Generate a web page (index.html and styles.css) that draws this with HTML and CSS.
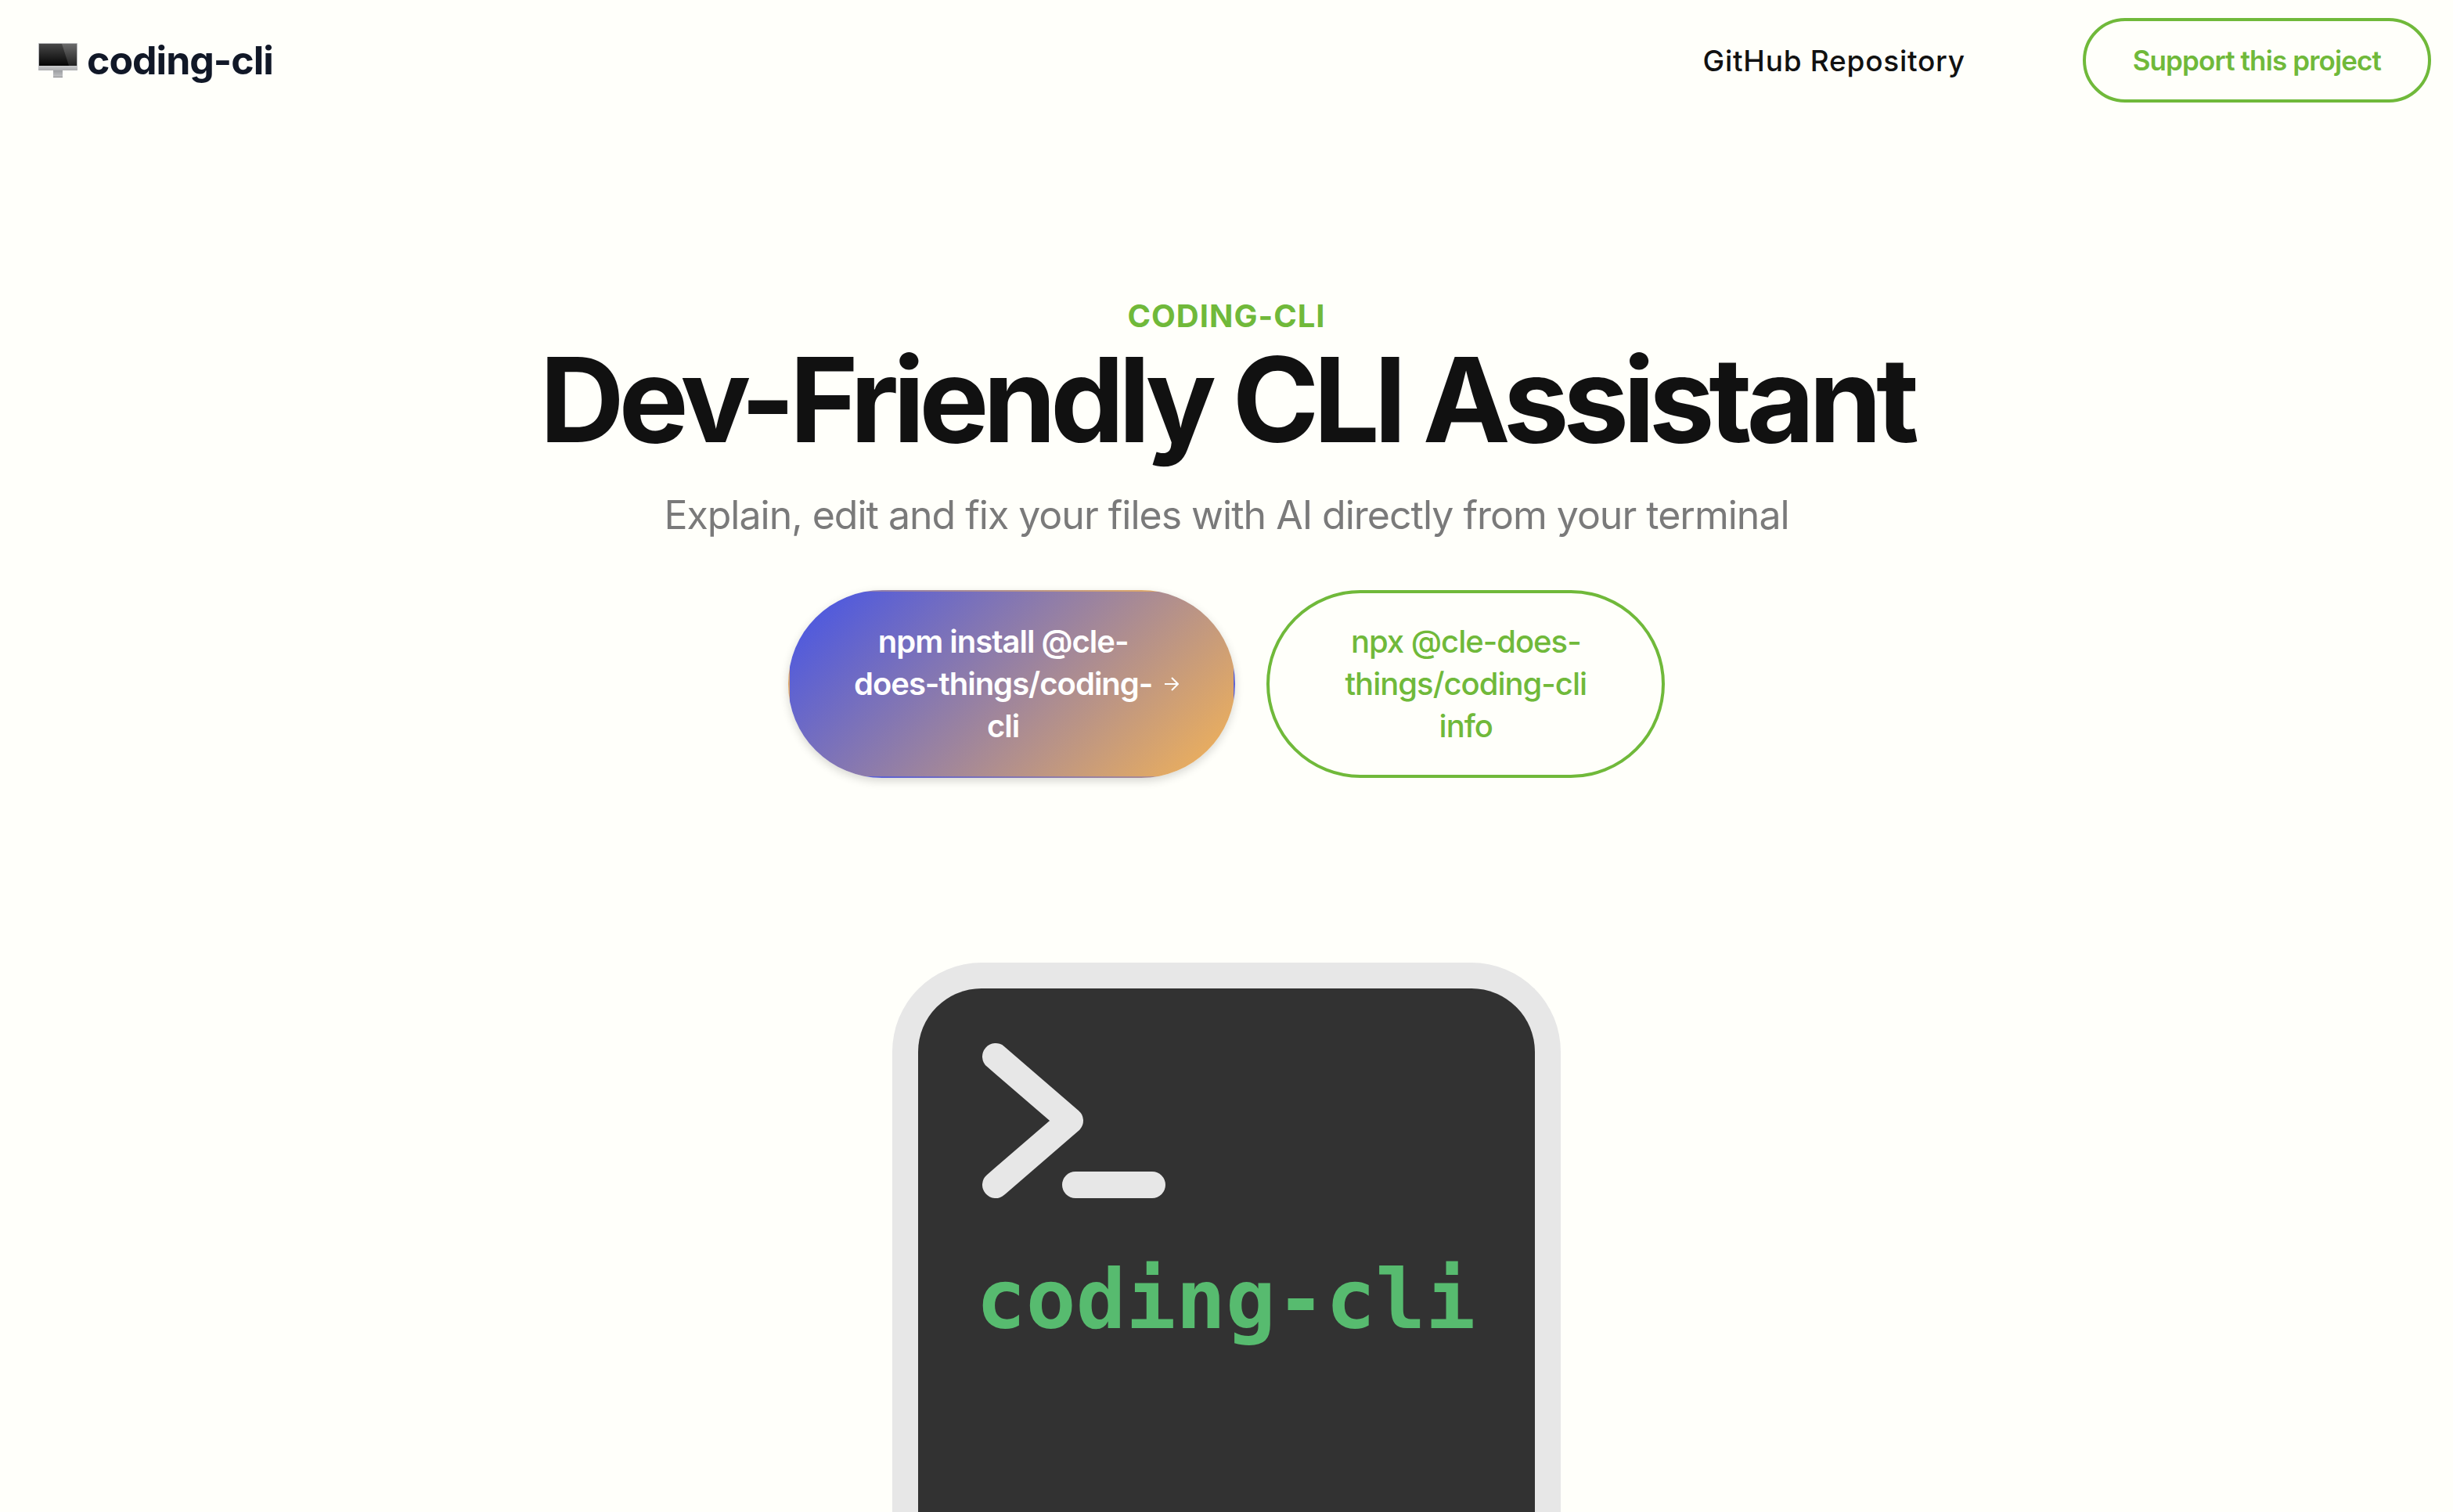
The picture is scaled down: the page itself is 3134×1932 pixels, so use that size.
FILE: index.html
```html
<!DOCTYPE html>
<html lang="en">
<head>
<meta charset="utf-8">
<meta name="viewport" content="width=device-width, initial-scale=1">
<title>coding-cli</title>
<link rel="stylesheet" href="styles.css">
</head>
<body>
<header class="navbar">
  <a class="brand" href="#">
    <svg class="brand-icon" viewBox="0 0 50 44" aria-hidden="true">
      <defs>
        <linearGradient id="screen" x1="0" y1="0" x2="0" y2="1"><stop offset="0" stop-color="#474747"/><stop offset="1" stop-color="#050505"/></linearGradient>
        <linearGradient id="shine" x1="0" y1="0" x2="0" y2="1"><stop offset="0" stop-color="#6a6a6a"/><stop offset="1" stop-color="#222"/></linearGradient>
        <linearGradient id="chin" x1="0" y1="0" x2="0" y2="1"><stop offset="0" stop-color="#c9cacc"/><stop offset="1" stop-color="#adaeb1"/></linearGradient>
        <linearGradient id="stand" x1="0" y1="0" x2="0" y2="1"><stop offset="0" stop-color="#999b9e"/><stop offset="1" stop-color="#c4c5c7"/></linearGradient>
      </defs>
      <rect x="19" y="34" width="12" height="10" fill="url(#stand)"/>
      <rect width="50" height="35" rx="1" fill="#b6b7b9"/>
      <rect x="1" y="1" width="48" height="28" fill="url(#screen)"/>
      <path d="M30 1H49V29H39Z" fill="url(#shine)"/>
      <rect y="29" width="50" height="6" rx="1" fill="url(#chin)"/>
      <rect x="19" y="43" width="12" height="1" fill="#88898c"/>
    </svg>
    <span>coding-cli</span>
  </a>
  <nav class="nav-links">
    <a class="nav-link" href="#">GitHub Repository</a>
    <a class="button button-small" href="#">Support this project</a>
  </nav>
</header>
<main class="hero">
  <p class="eyebrow">CODING-CLI</p>
  <h1 class="title">Dev-Friendly CLI Assistant</h1>
  <p class="subtitle">Explain, edit and fix your files with AI directly from your terminal</p>
  <div class="actions">
    <button class="button button-large button-primary" type="button">
      <span>npm install @cle-<br>does-things/coding-<br>cli</span>
      <svg class="arrow" viewBox="0 0 18 18" aria-hidden="true"><path d="M0 9H16M9 1L17 9L9 17"/></svg>
    </button>
    <button class="button button-large" type="button">npx @cle-does-<br>things/coding-cli<br>info</button>
  </div>
  <div class="terminal">
    <svg class="prompt" viewBox="0 0 234 198" aria-hidden="true"><path d="M17 17L112 99L17 181M119 181H217"/></svg>
    <p class="terminal-text">coding-cli</p>
  </div>
</main>
</body>
</html>
```
FILE: styles.css
```css
* {
  box-sizing: border-box;
}

body {
  margin: 0;
  min-height: 100vh;
  display: flex;
  flex-direction: column;
  background: #fffffa;
  color: #111;
  font-family: Inter, "Liberation Sans", sans-serif;
}

p,
h1 {
  margin: 0;
}

a {
  color: inherit;
  text-decoration: none;
}

.navbar {
  display: flex;
  justify-content: space-between;
  align-items: center;
  padding: 23px 28px 23px 49px;
}

.brand {
  display: flex;
  align-items: center;
  gap: 12px;
  color: #111827;
  font-size: 50px;
  font-weight: 700;
  line-height: 60px;
  letter-spacing: -0.02em;
}

.brand-icon {
  width: 50px;
  height: 44px;
}

.nav-links {
  display: flex;
  align-items: center;
  gap: 150px;
}

.nav-link {
  font-size: 37px;
  font-weight: 500;
  letter-spacing: 0.02em;
}

.button {
  border: 4px solid #70b93a;
  border-radius: 120px;
  background: transparent;
  color: #70b93a;
  font-family: inherit;
  letter-spacing: -0.025em;
  cursor: pointer;
}

.button-small {
  padding: 26px 60px;
  font-size: 35px;
  font-weight: 600;
  line-height: 48px;
}

.hero {
  flex: 1;
  display: flex;
  flex-direction: column;
  align-items: center;
  padding-top: 228px;
  text-align: center;
}

.eyebrow {
  color: #70b93a;
  font-size: 40px;
  font-weight: 700;
  line-height: 44px;
  letter-spacing: 0.025em;
}

.title {
  font-size: 150px;
  font-weight: 700;
  line-height: 170px;
  letter-spacing: -0.05em;
}

.subtitle {
  padding-top: 22px;
  color: #7a7a7a;
  font-size: 50px;
  line-height: 80px;
  letter-spacing: -0.02em;
}

.actions {
  display: flex;
  gap: 40px;
  padding-top: 56px;
}

.button-large {
  padding: 35px 96px;
  font-size: 40px;
  font-weight: 500;
  line-height: 54px;
}

.button-primary {
  display: flex;
  align-items: center;
  gap: 16px;
  padding: 37px 70px 37px 82px;
  border: 2px solid transparent;
  background: linear-gradient(135deg, #4353e8, #f5b455);
  box-shadow: 0 4px 12px rgba(0, 0, 0, 0.16);
  color: #fff;
  font-weight: 600;
}

.arrow {
  width: 18px;
  height: 18px;
  fill: none;
  stroke: currentColor;
  stroke-width: 2;
}

.terminal {
  flex: 1;
  width: 100%;
  max-width: 854px;
  margin-top: 236px;
  padding: 70px 74px;
  border: 33px solid #e7e7e7;
  border-bottom: 0;
  border-radius: 114px 114px 0 0;
  background: #323232;
  text-align: left;
}

.prompt {
  display: block;
  width: 234px;
  height: 198px;
  margin-left: 8px;
  fill: none;
  stroke: #e7e7e7;
  stroke-width: 34;
  stroke-linecap: round;
  stroke-linejoin: round;
}

.terminal-text {
  padding-top: 68px;
  color: #57bb6f;
  font-family: "DejaVu Sans Mono", "Liberation Mono", monospace;
  font-size: 106px;
  font-weight: 700;
  line-height: 124px;
  white-space: nowrap;
}
```
